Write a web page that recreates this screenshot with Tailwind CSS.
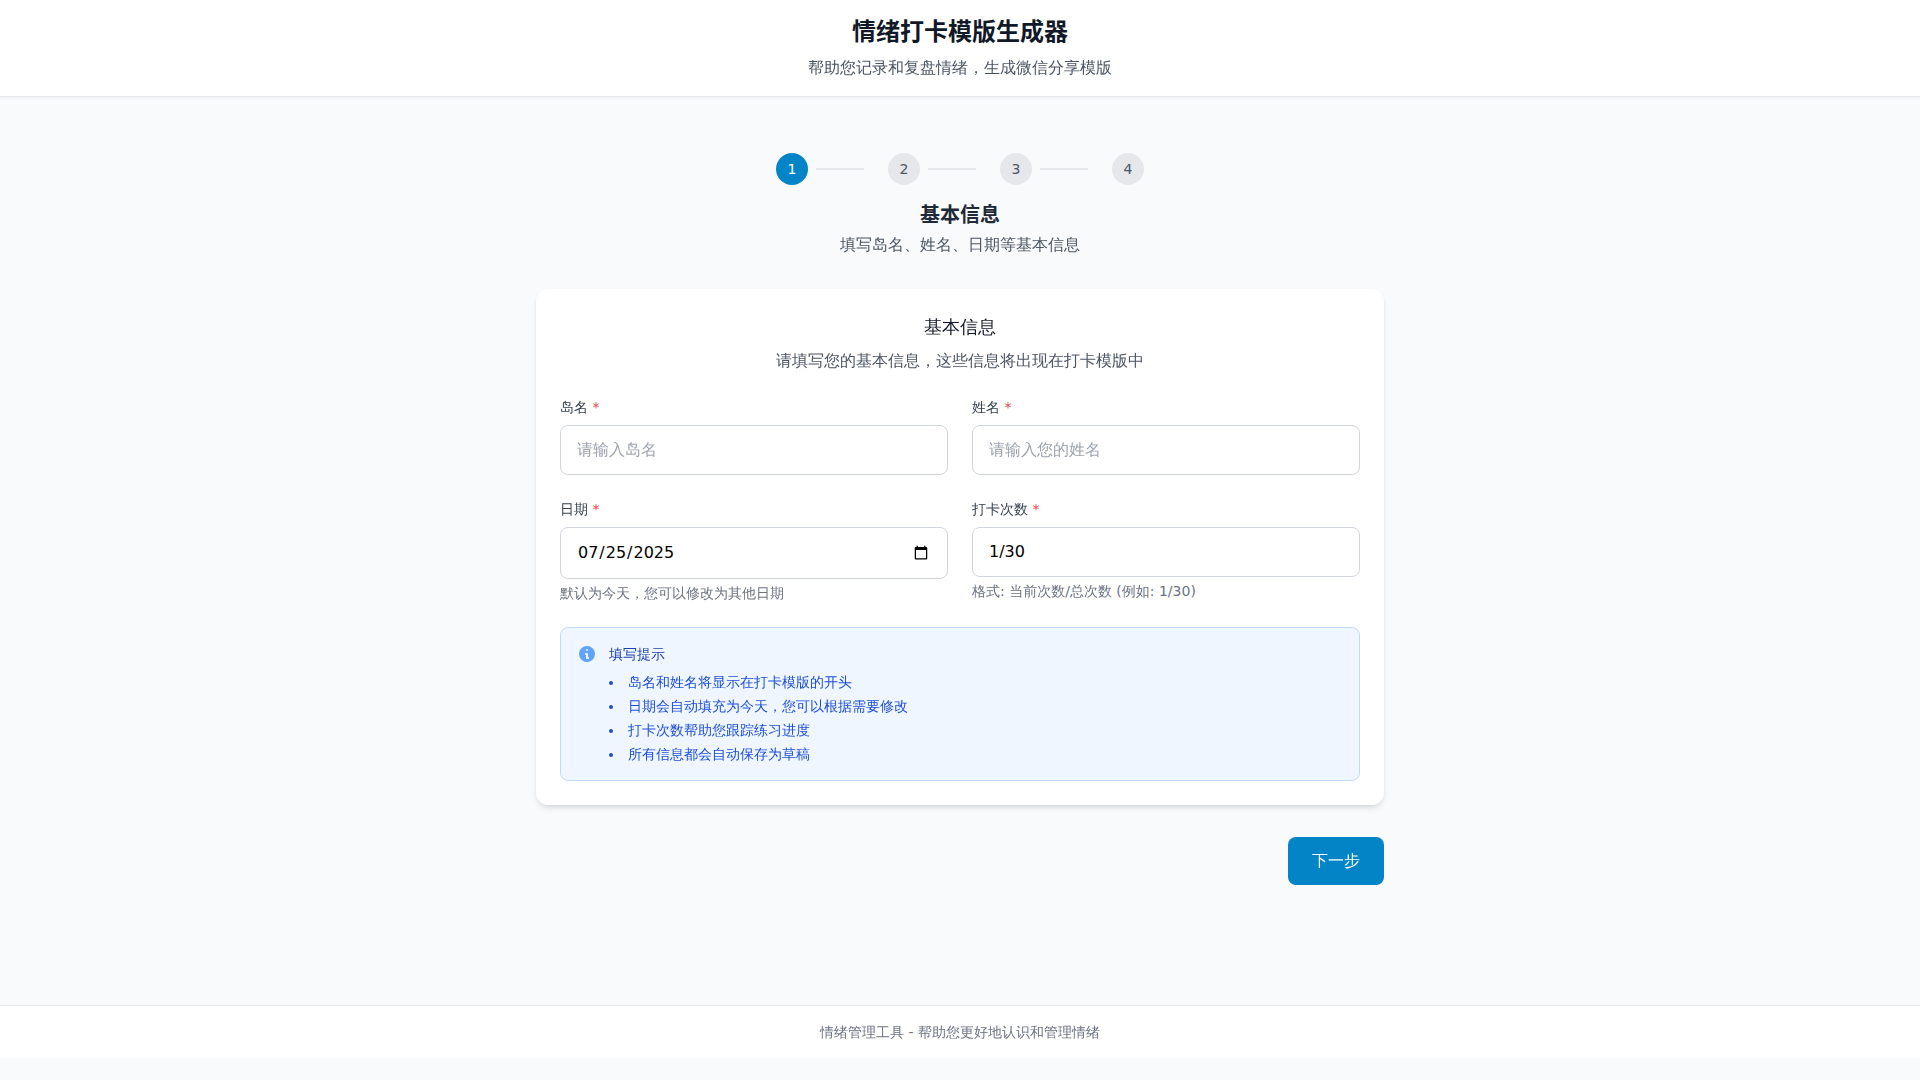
<!DOCTYPE html>
<html lang="zh-CN">
<head>
    <meta charset="UTF-8">
    <meta name="viewport" content="width=device-width, initial-scale=1.0">
    <title>情绪打卡模版生成器</title>
    <script src="https://cdn.jsdelivr.net/npm/@tailwindcss/browser@4"></script>
</head>
<body class="bg-gray-50 min-h-screen font-['DejaVu_Sans','WenQuanYi_Zen_Hei','Noto_Sans_CJK_SC',sans-serif]">
    <header class="bg-white border-b border-gray-200 shadow-xs py-4 text-center">
        <h1 class="text-2xl font-bold font-['DejaVu_Sans','Noto_Sans_CJK_SC',sans-serif] text-[#111827]">情绪打卡模版生成器</h1>
        <p class="mt-2 text-[#4b5563]">帮助您记录和复盘情绪，生成微信分享模版</p>
    </header>

    <main class="max-w-4xl mx-auto px-6 py-14">
        <!-- steps -->
        <div class="mb-8 text-center">
            <ol class="flex justify-center gap-6 text-sm text-[#4b5563]">
                <li class="flex items-center gap-2">
                    <span class="w-8 h-8 rounded-full bg-[#0284c7] text-white flex items-center justify-center">1</span>
                    <span class="w-12 h-0.5 bg-gray-200"></span>
                </li>
                <li class="flex items-center gap-2">
                    <span class="w-8 h-8 rounded-full bg-gray-200 flex items-center justify-center">2</span>
                    <span class="w-12 h-0.5 bg-gray-200"></span>
                </li>
                <li class="flex items-center gap-2">
                    <span class="w-8 h-8 rounded-full bg-gray-200 flex items-center justify-center">3</span>
                    <span class="w-12 h-0.5 bg-gray-200"></span>
                </li>
                <li class="flex items-center">
                    <span class="w-8 h-8 rounded-full bg-gray-200 flex items-center justify-center">4</span>
                </li>
            </ol>
            <h2 class="mt-4 text-xl font-semibold font-['DejaVu_Sans','Noto_Sans_CJK_SC',sans-serif] text-[#1f2937]">基本信息</h2>
            <p class="mt-1 text-[#4b5563]">填写岛名、姓名、日期等基本信息</p>
        </div>

        <form id="checkinForm">
            <div class="bg-white rounded-xl shadow-md p-6">
                <div class="mb-6 text-center">
                    <h3 class="text-lg text-[#111827]">基本信息</h3>
                    <p class="mt-2 text-[#4b5563]">请填写您的基本信息，这些信息将出现在打卡模版中</p>
                </div>

                <div class="grid grid-cols-1 md:grid-cols-2 gap-6">
                    <div>
                        <label for="island" class="block mb-2 text-sm text-[#374151]">岛名 <span class="text-[#ef4444]">*</span></label>
                        <input id="island" type="text" placeholder="请输入岛名" class="block w-full px-4 py-3 border border-gray-300 rounded-lg bg-white text-black placeholder:text-[#9ca3af]">
                    </div>
                    <div>
                        <label for="name" class="block mb-2 text-sm text-[#374151]">姓名 <span class="text-[#ef4444]">*</span></label>
                        <input id="name" type="text" placeholder="请输入您的姓名" class="block w-full px-4 py-3 border border-gray-300 rounded-lg bg-white text-black placeholder:text-[#9ca3af]">
                    </div>
                    <div>
                        <label for="date" class="block mb-2 text-sm text-[#374151]">日期 <span class="text-[#ef4444]">*</span></label>
                        <input id="date" type="date" value="2025-07-25" class="block w-full h-13 px-4 py-3 border border-gray-300 rounded-lg bg-white text-black">
                        <p class="mt-1 text-sm text-[#6b7280]">默认为今天，您可以修改为其他日期</p>
                    </div>
                    <div>
                        <label for="count" class="block mb-2 text-sm text-[#374151]">打卡次数 <span class="text-[#ef4444]">*</span></label>
                        <input id="count" type="text" value="1/30" class="block w-full px-4 py-3 border border-gray-300 rounded-lg bg-white text-black">
                        <p class="mt-1 text-sm text-[#6b7280]">格式: 当前次数/总次数 (例如: 1/30)</p>
                    </div>
                </div>

                <div class="mt-6 flex gap-3 p-4 bg-[#eff6ff] border border-[#bfdbfe] rounded-lg text-sm">
                    <svg class="w-5 h-5 shrink-0 text-[#60a5fa]" viewBox="0 0 20 20" fill="currentColor" aria-hidden="true">
                        <path fill-rule="evenodd" d="M18 10a8 8 0 11-16 0 8 8 0 0116 0zm-7-4a1 1 0 11-2 0 1 1 0 012 0zM9 9a1 1 0 000 2v3a1 1 0 001 1h1a1 1 0 100-2v-3a1 1 0 00-1-1H9z" clip-rule="evenodd"/>
                    </svg>
                    <div>
                        <h4 class="text-[#1e40af]">填写提示</h4>
                        <ul class="mt-2 list-disc list-inside space-y-1 text-[#1d4ed8]">
                            <li>岛名和姓名将显示在打卡模版的开头</li>
                            <li>日期会自动填充为今天，您可以根据需要修改</li>
                            <li>打卡次数帮助您跟踪练习进度</li>
                            <li>所有信息都会自动保存为草稿</li>
                        </ul>
                    </div>
                </div>
            </div>

            <div class="mt-8 flex justify-end">
                <button type="button" class="px-6 py-3 rounded-lg bg-[#0284c7] text-white">下一步</button>
            </div>
        </form>
    </main>

    <footer class="mt-16 bg-white border-t border-gray-200 py-4 text-center text-sm text-[#6b7280]">
        <p>情绪管理工具 - 帮助您更好地认识和管理情绪</p>
    </footer>
</body>
</html>
